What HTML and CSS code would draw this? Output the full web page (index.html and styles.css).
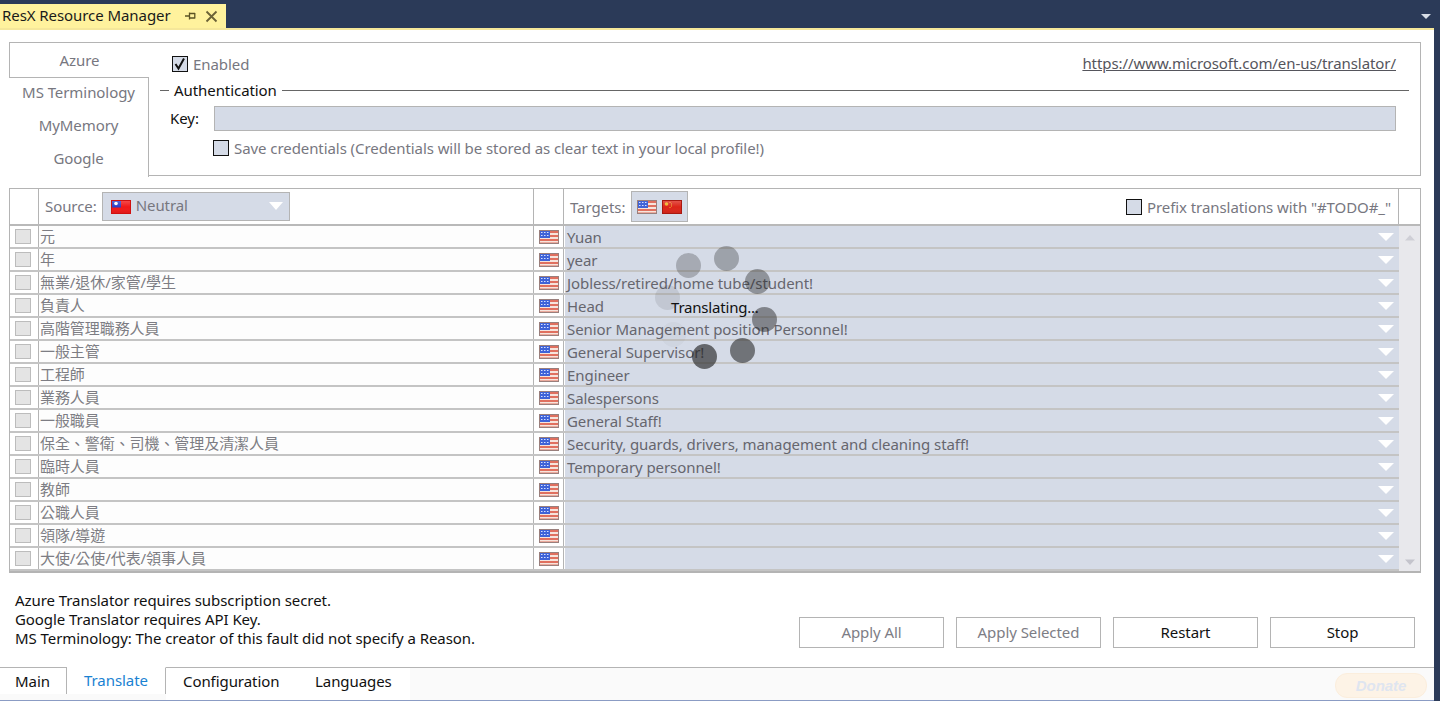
FILE: index.html
```html
<!DOCTYPE html>
<html lang="en">
<head>
    <meta charset="UTF-8">
    <meta name="viewport" content="width=device-width, initial-scale=1.0">
    <title>ResX Resource Manager</title>
    <link rel="stylesheet" href="styles.css">
</head>
<body>
    <svg class="defs" width="0" height="0">
        <defs>
            <linearGradient id="shine" x1="0" y1="0" x2="0" y2="1">
                <stop offset="0" stop-color="#fff" stop-opacity=".25"/>
                <stop offset=".5" stop-color="#fff" stop-opacity="0"/>
                <stop offset="1" stop-color="#000" stop-opacity=".1"/>
            </linearGradient>
            <symbol id="flag-us" viewBox="0 0 20 14">
                <rect width="20" height="14" fill="#f6e4dc"/>
                <path d="M0 1h20v2H0zM0 5h20v2H0zM0 9h20v2H0zM0 12.500h20V14H0z" fill="#e0705f"/>
                <rect width="11" height="8" fill="#3f63d8"/>
                <path d="M2 2h1.500v1H2zM5 2h1.500v1H5zM8 2h1.500v1H8zM2 5h1.500v1H2zM5 5h1.500v1H5zM8 5h1.500v1H8z" fill="#d5e0ff"/>
                <rect x=".5" y=".5" width="19" height="13" fill="none" stroke="#9a7f7c"/>
            </symbol>
            <symbol id="flag-tw" viewBox="0 0 20 14">
                <rect width="20" height="14" fill="#f01818"/>
                <rect width="10" height="7.500" fill="#2a3fc8"/>
                <circle cx="5" cy="3.500" r="1.800" fill="#fff"/>
                <rect width="20" height="14" fill="url(#shine)"/>
                <rect x=".5" y=".5" width="19" height="13" fill="none" stroke="#d01010"/>
            </symbol>
            <symbol id="flag-cn" viewBox="0 0 20 14">
                <rect width="20" height="14" fill="#dc2418"/>
                <circle cx="4.500" cy="4" r="1.800" fill="#f0b428"/>
                <path d="M7.500 2h1v1h-1zM9 3.500h1v1H9zM9 5.500h1v1H9zM7.500 7h1v1h-1z" fill="#eeb830"/>
                <rect width="20" height="14" fill="url(#shine)"/>
                <rect x=".5" y=".5" width="19" height="13" fill="none" stroke="#a81810"/>
            </symbol>
        </defs>
    </svg>

    <header class="titlebar">
        <div class="doc-tab">
            <span>ResX Resource Manager</span>
            <svg class="pin" width="12" height="12" viewBox="0 0 12 12"><path d="M1 6h4.500M5.500 2.500v7M5.500 3.500h5.500M5.500 8h5.500M10.800 3v5.500" fill="none" stroke="#5c5424" stroke-width="1.300"/></svg>
            <svg class="close" width="13" height="13" viewBox="0 0 13 13"><path d="M1.500 1.500l10 10M11.500 1.500l-10 10" fill="none" stroke="#6b6237" stroke-width="1.800"/></svg>
        </div>
        <svg class="menu-arrow" width="10" height="6" viewBox="0 0 10 6"><path d="M0 0h10L5 5z" fill="#d8dde6"/></svg>
    </header>

    <main class="window">
        <section class="provider-panel">
            <nav class="provider-tabs">
                <div class="provider-tab selected">Azure</div>
                <div class="provider-tab">MS Terminology</div>
                <div class="provider-tab">MyMemory</div>
                <div class="provider-tab">Google</div>
            </nav>
            <div class="provider-body">
                <div class="enabled-row">
                    <label class="check-label">
                        <span class="check"><svg width="14" height="14" viewBox="0 0 14 14"><path d="M2.500 7l3 4.500L11 1.500" fill="none" stroke="#111" stroke-width="2"/></svg></span>
                        Enabled
                    </label>
                    <span class="provider-link">https://www.microsoft.com/en-us/translator/</span>
                </div>
                <div class="group-title"><span>Authentication</span></div>
                <div class="key-row">
                    <span class="key-label">Key:</span>
                    <div class="key-input"></div>
                </div>
                <label class="check-label save-row"><span class="check"></span>Save credentials (Credentials will be stored as clear text in your local profile!)</label>
            </div>
        </section>

        <section class="grid">
            <div class="grid-head">
                <div class="cell"></div>
                <div class="cell head-source">
                    <span class="head-label">Source:</span>
                    <div class="combo">
                        <svg class="flag"><use href="#flag-tw"/></svg>
                        <span class="combo-text">Neutral</span>
                        <i class="tri combo-tri"></i>
                    </div>
                </div>
                <div class="cell"></div>
                <div class="cell head-targets">
                    <span>Targets:</span>
                    <div class="target-picker">
                        <svg class="flag"><use href="#flag-us"/></svg>
                        <svg class="flag"><use href="#flag-cn"/></svg>
                    </div>
                    <label class="check-label prefix"><span class="check"></span>Prefix translations with "#TODO#_"</label>
                </div>
                <div class="cell"></div>
            </div>
            <div class="grid-main">
                <div class="rows">
                    <div class="row"><div class="mark"><i></i></div><div class="src">元</div><div class="flag-cell"><svg class="flag"><use href="#flag-us"/></svg></div><div class="target"><span>Yuan</span><i class="tri"></i></div></div>
                    <div class="row"><div class="mark"><i></i></div><div class="src">年</div><div class="flag-cell"><svg class="flag"><use href="#flag-us"/></svg></div><div class="target"><span>year</span><i class="tri"></i></div></div>
                    <div class="row"><div class="mark"><i></i></div><div class="src">無業/退休/家管/學生</div><div class="flag-cell"><svg class="flag"><use href="#flag-us"/></svg></div><div class="target"><span>Jobless/retired/home tube/student!</span><i class="tri"></i></div></div>
                    <div class="row"><div class="mark"><i></i></div><div class="src">負責人</div><div class="flag-cell"><svg class="flag"><use href="#flag-us"/></svg></div><div class="target"><span>Head</span><i class="tri"></i></div></div>
                    <div class="row"><div class="mark"><i></i></div><div class="src">高階管理職務人員</div><div class="flag-cell"><svg class="flag"><use href="#flag-us"/></svg></div><div class="target"><span>Senior Management position Personnel!</span><i class="tri"></i></div></div>
                    <div class="row"><div class="mark"><i></i></div><div class="src">一般主管</div><div class="flag-cell"><svg class="flag"><use href="#flag-us"/></svg></div><div class="target"><span>General Supervisor!</span><i class="tri"></i></div></div>
                    <div class="row"><div class="mark"><i></i></div><div class="src">工程師</div><div class="flag-cell"><svg class="flag"><use href="#flag-us"/></svg></div><div class="target"><span>Engineer</span><i class="tri"></i></div></div>
                    <div class="row"><div class="mark"><i></i></div><div class="src">業務人員</div><div class="flag-cell"><svg class="flag"><use href="#flag-us"/></svg></div><div class="target"><span>Salespersons</span><i class="tri"></i></div></div>
                    <div class="row"><div class="mark"><i></i></div><div class="src">一般職員</div><div class="flag-cell"><svg class="flag"><use href="#flag-us"/></svg></div><div class="target"><span>General Staff!</span><i class="tri"></i></div></div>
                    <div class="row"><div class="mark"><i></i></div><div class="src">保全、警衛、司機、管理及清潔人員</div><div class="flag-cell"><svg class="flag"><use href="#flag-us"/></svg></div><div class="target"><span>Security, guards, drivers, management and cleaning staff!</span><i class="tri"></i></div></div>
                    <div class="row"><div class="mark"><i></i></div><div class="src">臨時人員</div><div class="flag-cell"><svg class="flag"><use href="#flag-us"/></svg></div><div class="target"><span>Temporary personnel!</span><i class="tri"></i></div></div>
                    <div class="row"><div class="mark"><i></i></div><div class="src">教師</div><div class="flag-cell"><svg class="flag"><use href="#flag-us"/></svg></div><div class="target"><span></span><i class="tri"></i></div></div>
                    <div class="row"><div class="mark"><i></i></div><div class="src">公職人員</div><div class="flag-cell"><svg class="flag"><use href="#flag-us"/></svg></div><div class="target"><span></span><i class="tri"></i></div></div>
                    <div class="row"><div class="mark"><i></i></div><div class="src">領隊/導遊</div><div class="flag-cell"><svg class="flag"><use href="#flag-us"/></svg></div><div class="target"><span></span><i class="tri"></i></div></div>
                    <div class="row"><div class="mark"><i></i></div><div class="src">大使/公使/代表/領事人員</div><div class="flag-cell"><svg class="flag"><use href="#flag-us"/></svg></div><div class="target"><span></span><i class="tri"></i></div></div>
                </div>
                <div class="scrollbar">
                    <svg width="12" height="7" viewBox="0 0 12 7"><path d="M1 6.500h10L6 1z" fill="#cfcfd6"/></svg>
                    <svg width="12" height="7" viewBox="0 0 12 7"><path d="M1 .5h10L6 6z" fill="#c4c4cc"/></svg>
                </div>
            </div>
        </section>

        <section class="footer-row">
            <div class="messages">
                <div>Azure Translator requires subscription secret.</div>
                <div>Google Translator requires API Key.</div>
                <div>MS Terminology: The creator of this fault did not specify a Reason.</div>
            </div>
            <div class="actions">
                <button class="btn disabled">Apply All</button>
                <button class="btn disabled">Apply Selected</button>
                <button class="btn">Restart</button>
                <button class="btn">Stop</button>
            </div>
        </section>

        <nav class="main-tabs">
            <div class="main-tab first">Main</div>
            <div class="main-tab active">Translate</div>
            <div class="main-tab config">Configuration</div>
            <div class="main-tab languages">Languages</div>
            <div class="donate">Donate</div>
        </nav>

        <!-- busy indicator, lies over the grid -->
        <div class="busy">
            <i class="dot d1"></i><i class="dot d2"></i><i class="dot d3"></i><i class="dot d4"></i>
            <i class="dot d5"></i><i class="dot d6"></i><i class="dot d7"></i><i class="dot d8"></i>
            <span class="busy-text">Translating...</span>
        </div>
    </main>
</body>
</html>
```

FILE: styles.css
```css
* {
    box-sizing: border-box;
}

html, body {
    height: 100%;
}

body {
    margin: 0;
    height: 701px;
    overflow: hidden;
    display: flex;
    flex-direction: column;
    background-color: #2b3a58;
    font-family: "Noto Sans", "Noto Sans CJK TC", sans-serif;
    font-size: 15px;
    letter-spacing: -0.07px;
    color: #111;
}

.defs {
    position: absolute;
}

/* Title bar */
.titlebar {
    height: 28px;
    flex: none;
    display: flex;
    align-items: flex-end;
    justify-content: space-between;
    padding-right: 9px;
}

.doc-tab {
    width: 226px;
    height: 24px;
    display: flex;
    align-items: center;
    padding-left: 2px;
    background-color: #fff29d;
    color: #1a1a1a;
}

.doc-tab span {
    width: 182px;
    white-space: nowrap;
    padding-bottom: 2px;
}

.pin {
    margin-right: 9px;
}

.menu-arrow {
    margin-bottom: 8px;
}

/* Main window */
.window {
    position: relative;
    width: 1434px;
    height: 673px;
    flex: none;
    background-color: #fff;
    border-top: 2px solid #f5e79a;
    border-bottom: 1px solid #8b9cc4;
    display: flex;
    flex-direction: column;
}

/* Provider panel */
.provider-panel {
    margin: 12px 13px 0 9px;
    height: 134px;
    flex: none;
    display: flex;
    border-top: 1px solid #b4b4b4;
}

.provider-tabs {
    width: 140px;
    flex: none;
}

.provider-tab {
    height: 33px;
    display: flex;
    align-items: center;
    justify-content: center;
    padding-bottom: 6px;
    border-right: 1px solid #b4b4b4;
    color: #77777f;
}

.provider-tab.selected {
    height: 35px;
    padding-bottom: 0;
    border: 1px solid #b4b4b4;
    border-top: 0;
    border-right: 0;
}

.provider-body {
    flex: 1;
    border-right: 1px solid #b4b4b4;
    border-bottom: 1px solid #b4b4b4;
    padding: 8px 11px 0 12px;
    margin-left: -1px;
}

.enabled-row {
    display: flex;
    justify-content: space-between;
    align-items: center;
    height: 26px;
    padding: 0 13px 0 12px;
}

.check-label {
    display: flex;
    align-items: center;
    gap: 5px;
    color: #77777f;
    white-space: nowrap;
}

.check {
    width: 16px;
    height: 16px;
    display: block;
    flex: none;
    background-color: #d5dbe7;
    border: 1px solid #111;
}

.check svg {
    display: block;
}

.provider-link {
    color: #55555c;
    text-decoration: underline;
    padding-bottom: 2px;
}

.group-title {
    height: 22px;
    margin-top: 2px;
    display: flex;
    align-items: center;
    gap: 5px;
}

.group-title::before {
    content: "";
    width: 9px;
    height: 1px;
    background-color: #666;
}

.group-title::after {
    content: "";
    flex: 1;
    height: 1px;
    background-color: #666;
}

.key-row {
    display: flex;
    align-items: center;
    margin-top: 5px;
    padding-right: 13px;
}

.key-label {
    width: 54px;
    padding: 0 0 1px 10px;
    flex: none;
}

.key-input {
    flex: 1;
    height: 25px;
    background-color: #d5dbe7;
    border: 1px solid #b4b4b4;
}

.save-row {
    margin: 7px 0 0 53px;
}

/* Grid */
.grid {
    margin: 12px 13px 0 9px;
    height: 385px;
    flex: none;
    border: 1px solid #b4b4b4;
    border-bottom-width: 2px;
}

.grid-head {
    height: 37px;
    display: grid;
    grid-template-columns: 29px 495px 30px 835px 1fr;
    border-bottom: 2px solid #b9b9b9;
}

.cell {
    border-right: 1px solid #b4b4b4;
    display: flex;
    align-items: center;
    color: #77777f;
}

.cell:last-child {
    border-right: 0;
}

.head-source {
    padding-left: 6px;
    gap: 5px;
}

.head-label {
    padding-bottom: 2px;
}

.combo {
    width: 188px;
    height: 29px;
    display: flex;
    align-items: center;
    gap: 5px;
    padding-left: 8px;
    background-color: #d5dbe7;
    border: 1px solid #b4b4b4;
    position: relative;
}

.combo-text {
    padding-bottom: 3px;
}

.tri {
    width: 0;
    height: 0;
    border-left: 8px solid transparent;
    border-right: 8px solid transparent;
    border-top: 8px solid #fff;
}

.combo-tri {
    position: absolute;
    right: 6px;
    top: 9px;
    border-left-width: 7px;
    border-right-width: 7px;
}

.flag {
    width: 20px;
    height: 14px;
    display: block;
    flex: none;
}

.head-targets {
    padding-left: 6px;
    gap: 6px;
}

.target-picker {
    height: 31px;
    width: 57px;
    display: flex;
    align-items: center;
    justify-content: center;
    gap: 5px;
    background-color: #d5dbe7;
    border: 1px solid #b4b4b4;
}

.prefix {
    margin-left: auto;
    margin-right: 7px;
}

.grid-main {
    display: flex;
    height: 345px;
}

.rows {
    width: 1389px;
    flex: none;
}

.row {
    height: 23px;
    display: grid;
    grid-template-columns: 29px 495px 30px 1fr;
    grid-template-rows: 21px;
    border-bottom: 2px solid #c4c4c4;
    color: #7d7d84;
}

.mark {
    border-right: 1px solid #b4b4b4;
    display: flex;
    align-items: center;
    justify-content: center;
    padding-right: 2px;
}

.mark i {
    width: 16px;
    height: 15px;
    background-color: #e4e4e4;
    border: 1px solid #bcbcbc;
}

.src {
    border-right: 1px solid #b4b4b4;
    background-color: #fdfdfd;
    padding-left: 1px;
    line-height: 21px;
    white-space: nowrap;
}

.flag-cell {
    border-right: 1px solid #b4b4b4;
    display: flex;
    align-items: center;
    justify-content: center;
}

.target {
    margin-left: 1px;
    background-color: #d5dbe7;
    display: flex;
    align-items: center;
    justify-content: space-between;
    padding: 0 5px 0 2px;
    color: #66666e;
}

.target span {
    line-height: 20px;
    padding-top: 1px;
}

.scrollbar {
    flex: 1;
    background-color: #e8e8ec;
    display: flex;
    flex-direction: column;
    justify-content: space-between;
    align-items: center;
    padding: 8px 0 5px;
}

/* Messages and buttons */
.footer-row {
    height: 94px;
    flex: none;
    display: flex;
    justify-content: space-between;
    padding: 18px 19px 0 15px;
}

.messages {
    line-height: 19px;
    color: #111;
    white-space: nowrap;
}

.actions {
    display: flex;
    gap: 12px;
    padding-top: 26px;
    height: 57px;
}

.btn {
    width: 145px;
    height: 31px;
    background-color: #fff;
    border: 1px solid #b4b4b4;
    font: inherit;
    letter-spacing: inherit;
    color: #111;
    padding: 0 0 2px;
}

.btn.disabled {
    color: #7d7d85;
}

/* Bottom tabs */
.main-tabs {
    flex: 1;
    display: flex;
    position: relative;
    border-top: 1px solid #b4b4b4;
    background-color: #fafafa;
}

.main-tab {
    height: 32px;
    display: flex;
    align-items: center;
    background-color: #fff;
    white-space: nowrap;
}

.main-tab.first {
    width: 67px;
    padding-left: 15px;
    border-right: 1px solid #b4b4b4;
    height: 26px;
}

.main-tab.active {
    width: 99px;
    margin-top: -1px;
    height: 27px;
    padding: 0 0 2px 17px;
    color: #1a82d2;
    border-top: 1px solid #fff;
    border-right: 1px solid #b4b4b4;
}

.main-tab.config {
    width: 132px;
    padding: 0 0 6px 17px;
}

.main-tab.languages {
    width: 112px;
    padding: 0 0 6px 17px;
}

.donate {
    position: absolute;
    right: 7px;
    top: 5px;
    width: 92px;
    height: 25px;
    border-radius: 12px;
    background-color: #fdf3e6;
    border: 1px solid #fbeedd;
    color: #dfe5f0;
    font-family: "Liberation Sans", sans-serif;
    font-size: 15px;
    font-weight: bold;
    font-style: italic;
    display: flex;
    align-items: center;
    justify-content: center;
}

/* Busy indicator */
.busy {
    position: absolute;
    left: 650px;
    top: 215px;
    width: 130px;
    height: 130px;
}

.dot {
    position: absolute;
    width: 25px;
    height: 25px;
    border-radius: 50%;
    background-color: #1e1e1e;
}

.d1 { left: 26px; top: 8px; opacity: .26; }
.d2 { left: 64px; top: 1px; opacity: .3; }
.d3 { left: 95px; top: 24px; opacity: .38; }
.d4 { left: 102px; top: 62px; opacity: .46; }
.d5 { left: 80px; top: 93px; opacity: .55; }
.d6 { left: 42px; top: 99px; opacity: .62; }
.d7 { left: 5px; top: 40px; opacity: .1; }
.d8 { left: 11px; top: 77px; opacity: .03; }

.busy-text {
    position: absolute;
    left: 21px;
    top: 52px;
    color: #111;
    letter-spacing: -0.2px;
    white-space: nowrap;
}
```
